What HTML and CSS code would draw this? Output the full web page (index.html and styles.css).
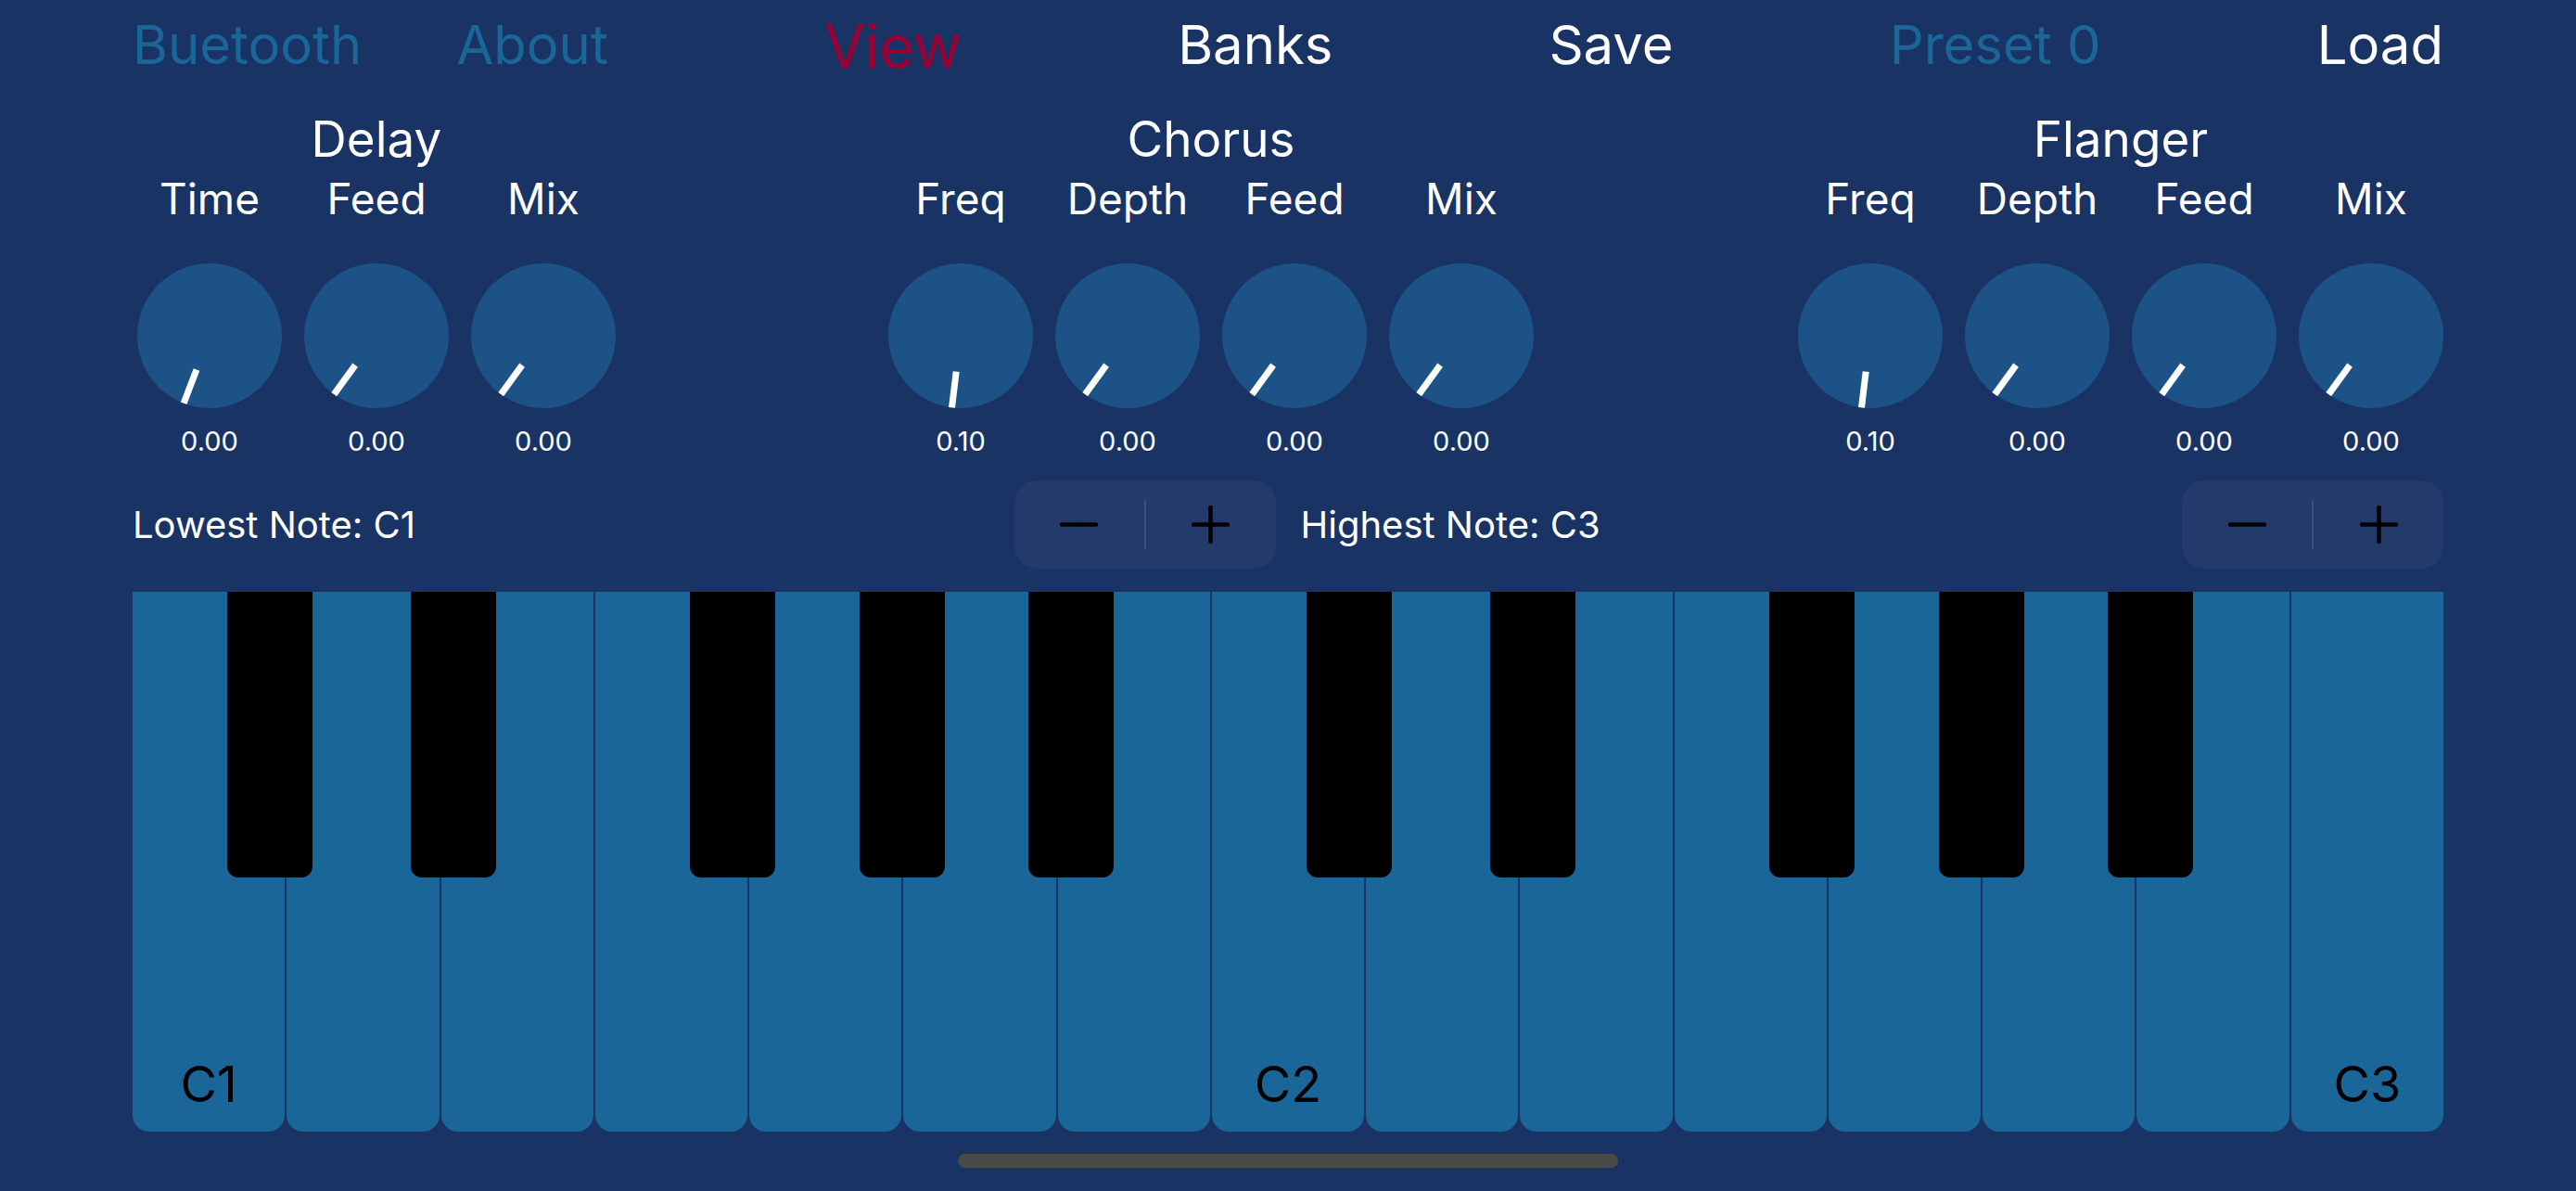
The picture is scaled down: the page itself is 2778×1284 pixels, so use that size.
FILE: index.html
```html
<!DOCTYPE html>
<html lang="en">
<head>
<meta charset="utf-8">
<title>Synth</title>
<link rel="stylesheet" href="styles.css">
</head>
<body>
<div class="app">
  <nav class="nav">
    <div class="nav-group">
      <span class="nav-item dim">Buetooth</span>
      <span class="nav-item dim">About</span>
    </div>
    <span class="nav-item view">View</span>
    <span class="nav-item">Banks</span>
    <span class="nav-item">Save</span>
    <span class="nav-item dim">Preset 0</span>
    <span class="nav-item">Load</span>
  </nav>

  <section class="effects">
    <div class="effect effect-delay">
      <div class="effect-title">Delay</div>
      <div class="knob-row">
        <div class="knob-col">
          <div class="param">Time</div>
          <svg class="knob" viewBox="0 0 156 156"><circle cx="78" cy="78" r="78"/><line x1="64.0" y1="114.4" x2="50.1" y2="150.8"/></svg>
          <div class="value">0.00</div>
        </div>
        <div class="knob-col">
          <div class="param">Feed</div>
          <svg class="knob" viewBox="0 0 156 156"><circle cx="78" cy="78" r="78"/><line x1="55.1" y1="109.6" x2="32.2" y2="141.1"/></svg>
          <div class="value">0.00</div>
        </div>
        <div class="knob-col">
          <div class="param">Mix</div>
          <svg class="knob" viewBox="0 0 156 156"><circle cx="78" cy="78" r="78"/><line x1="55.1" y1="109.6" x2="32.2" y2="141.1"/></svg>
          <div class="value">0.00</div>
        </div>
      </div>
    </div>

    <div class="effect effect-chorus">
      <div class="effect-title">Chorus</div>
      <div class="knob-row">
        <div class="knob-col">
          <div class="param">Freq</div>
          <svg class="knob" viewBox="0 0 156 156"><circle cx="78" cy="78" r="78"/><line x1="73.2" y1="116.7" x2="68.5" y2="155.4"/></svg>
          <div class="value">0.10</div>
        </div>
        <div class="knob-col">
          <div class="param">Depth</div>
          <svg class="knob" viewBox="0 0 156 156"><circle cx="78" cy="78" r="78"/><line x1="55.1" y1="109.6" x2="32.2" y2="141.1"/></svg>
          <div class="value">0.00</div>
        </div>
        <div class="knob-col">
          <div class="param">Feed</div>
          <svg class="knob" viewBox="0 0 156 156"><circle cx="78" cy="78" r="78"/><line x1="55.1" y1="109.6" x2="32.2" y2="141.1"/></svg>
          <div class="value">0.00</div>
        </div>
        <div class="knob-col">
          <div class="param">Mix</div>
          <svg class="knob" viewBox="0 0 156 156"><circle cx="78" cy="78" r="78"/><line x1="55.1" y1="109.6" x2="32.2" y2="141.1"/></svg>
          <div class="value">0.00</div>
        </div>
      </div>
    </div>

    <div class="effect effect-flanger">
      <div class="effect-title">Flanger</div>
      <div class="knob-row">
        <div class="knob-col">
          <div class="param">Freq</div>
          <svg class="knob" viewBox="0 0 156 156"><circle cx="78" cy="78" r="78"/><line x1="73.2" y1="116.7" x2="68.5" y2="155.4"/></svg>
          <div class="value">0.10</div>
        </div>
        <div class="knob-col">
          <div class="param">Depth</div>
          <svg class="knob" viewBox="0 0 156 156"><circle cx="78" cy="78" r="78"/><line x1="55.1" y1="109.6" x2="32.2" y2="141.1"/></svg>
          <div class="value">0.00</div>
        </div>
        <div class="knob-col">
          <div class="param">Feed</div>
          <svg class="knob" viewBox="0 0 156 156"><circle cx="78" cy="78" r="78"/><line x1="55.1" y1="109.6" x2="32.2" y2="141.1"/></svg>
          <div class="value">0.00</div>
        </div>
        <div class="knob-col">
          <div class="param">Mix</div>
          <svg class="knob" viewBox="0 0 156 156"><circle cx="78" cy="78" r="78"/><line x1="55.1" y1="109.6" x2="32.2" y2="141.1"/></svg>
          <div class="value">0.00</div>
        </div>
      </div>
    </div>
  </section>

  <section class="note-row">
    <div class="note-half">
      <span class="note-label">Lowest Note: C1</span>
      <div class="stepper">
        <div class="step-btn"><svg viewBox="0 0 41 41" class="step-icon"><line x1="2" y1="20.5" x2="39" y2="20.5"/></svg></div>
        <div class="step-divider"></div>
        <div class="step-btn"><svg viewBox="0 0 41 41" class="step-icon"><line x1="2" y1="20.5" x2="39" y2="20.5"/><line x1="20.5" y1="2" x2="20.5" y2="39"/></svg></div>
      </div>
    </div>
    <div class="note-half">
      <span class="note-label">Highest Note: C3</span>
      <div class="stepper">
        <div class="step-btn"><svg viewBox="0 0 41 41" class="step-icon"><line x1="2" y1="20.5" x2="39" y2="20.5"/></svg></div>
        <div class="step-divider"></div>
        <div class="step-btn"><svg viewBox="0 0 41 41" class="step-icon"><line x1="2" y1="20.5" x2="39" y2="20.5"/><line x1="20.5" y1="2" x2="20.5" y2="39"/></svg></div>
      </div>
    </div>
  </section>

  <section class="keyboard">
    <div class="white-keys">
      <div class="wkey"><span class="key-label">C1</span></div>
      <div class="wkey"></div>
      <div class="wkey"></div>
      <div class="wkey"></div>
      <div class="wkey"></div>
      <div class="wkey"></div>
      <div class="wkey"></div>
      <div class="wkey"><span class="key-label">C2</span></div>
      <div class="wkey"></div>
      <div class="wkey"></div>
      <div class="wkey"></div>
      <div class="wkey"></div>
      <div class="wkey"></div>
      <div class="wkey"></div>
      <div class="wkey"><span class="key-label">C3</span></div>
    </div>
    <div class="bkey b1"></div>
    <div class="bkey b2"></div>
    <div class="bkey b3"></div>
    <div class="bkey b4"></div>
    <div class="bkey b5"></div>
    <div class="bkey b6"></div>
    <div class="bkey b7"></div>
    <div class="bkey b8"></div>
    <div class="bkey b9"></div>
    <div class="bkey b10"></div>
  </section>

  <div class="home-indicator"></div>
</div>
</body>
</html>
```

FILE: styles.css
```css
* { box-sizing: border-box; }

html, body {
  margin: 0;
  padding: 0;
}

body {
  width: 2778px;
  height: 1284px;
  overflow: hidden;
  background: #1a3365;
  font-family: Inter, "Noto Sans", "Liberation Sans", sans-serif;
  color: #ffffff;
}

.app {
  padding: 0 143px;
}

/* ---------- top navigation ---------- */
.nav {
  display: flex;
  justify-content: space-between;
  align-items: flex-start;
  height: 96px;
}

.nav-group {
  display: flex;
  gap: 102px;
}

.nav-item {
  font-size: 58px;
  line-height: 96px;
  color: #ffffff;
  white-space: nowrap;
}

.nav-item.dim {
  color: #1b6699;
}

.nav-item.view {
  color: #990033;
  font-size: 64px;
  line-height: 99px;
}

/* ---------- effects ---------- */
.effects {
  display: flex;
  margin-top: 22px;
  padding-left: 5px;
}

.effect {
  display: flex;
  flex-direction: column;
  align-items: center;
}

.effect-chorus {
  margin-left: 294px;
}

.effect-flanger {
  margin-left: auto;
}

.effect-title {
  font-size: 53px;
  line-height: 64px;
  height: 64px;
}

.knob-row {
  display: flex;
  gap: 24px;
  margin-top: 4px;
}

.knob-col {
  width: 156px;
  display: flex;
  flex-direction: column;
  align-items: center;
}

.param {
  font-size: 46px;
  line-height: 56px;
  height: 56px;
  white-space: nowrap;
}

.knob {
  display: block;
  width: 156px;
  height: 156px;
  margin-top: 42px;
}

.knob circle {
  fill: #1c5285;
}

.knob line {
  stroke: #ffffff;
  stroke-width: 7;
}

.value {
  font-size: 29px;
  line-height: 36px;
  margin-top: 18px;
}

/* ---------- note range row ---------- */
.note-row {
  display: flex;
  gap: 27px;
  margin-top: 24px;
}

.note-half {
  flex: 1;
  display: flex;
  justify-content: space-between;
  align-items: center;
}

.note-label {
  font-size: 40px;
  line-height: 48px;
}

.stepper {
  width: 282px;
  height: 95px;
  border-radius: 24px;
  background: #243a6a;
  display: flex;
  align-items: center;
}

.step-btn {
  flex: 1;
  display: flex;
  justify-content: center;
  align-items: center;
  height: 100%;
}

.step-icon {
  width: 41px;
  height: 41px;
  display: block;
}

.step-icon line {
  stroke: #000000;
  stroke-width: 4.5;
  stroke-linecap: round;
}

.step-divider {
  width: 2px;
  height: 53px;
  background: #3a4f7e;
}

/* ---------- keyboard ---------- */
.keyboard {
  position: relative;
  height: 582px;
  margin-top: 25px;
}

.white-keys {
  display: flex;
  gap: 2px;
  height: 100%;
}

.wkey {
  flex: 1;
  background: #1a6699;
  border-radius: 0 0 18px 18px;
  display: flex;
  justify-content: center;
  align-items: flex-end;
  padding-bottom: 19px;
}

.key-label {
  font-size: 54px;
  line-height: 64px;
  color: #000000;
}

.bkey {
  position: absolute;
  top: 0;
  width: 3.69%;
  height: 308px;
  background: #000000;
  border-radius: 0 0 12px 12px;
}

.b1 { left: 4.09%; }
.b2 { left: 12.04%; }
.b3 { left: 24.12%; }
.b4 { left: 31.46%; }
.b5 { left: 38.76%; }
.b6 { left: 50.80%; }
.b7 { left: 58.75%; }
.b8 { left: 70.82%; }
.b9 { left: 78.17%; }
.b10 { left: 85.47%; }

/* ---------- home indicator ---------- */
.home-indicator {
  width: 712px;
  height: 15px;
  border-radius: 8px;
  background: #4a4a4a;
  margin: 24px auto 0;
}
```
